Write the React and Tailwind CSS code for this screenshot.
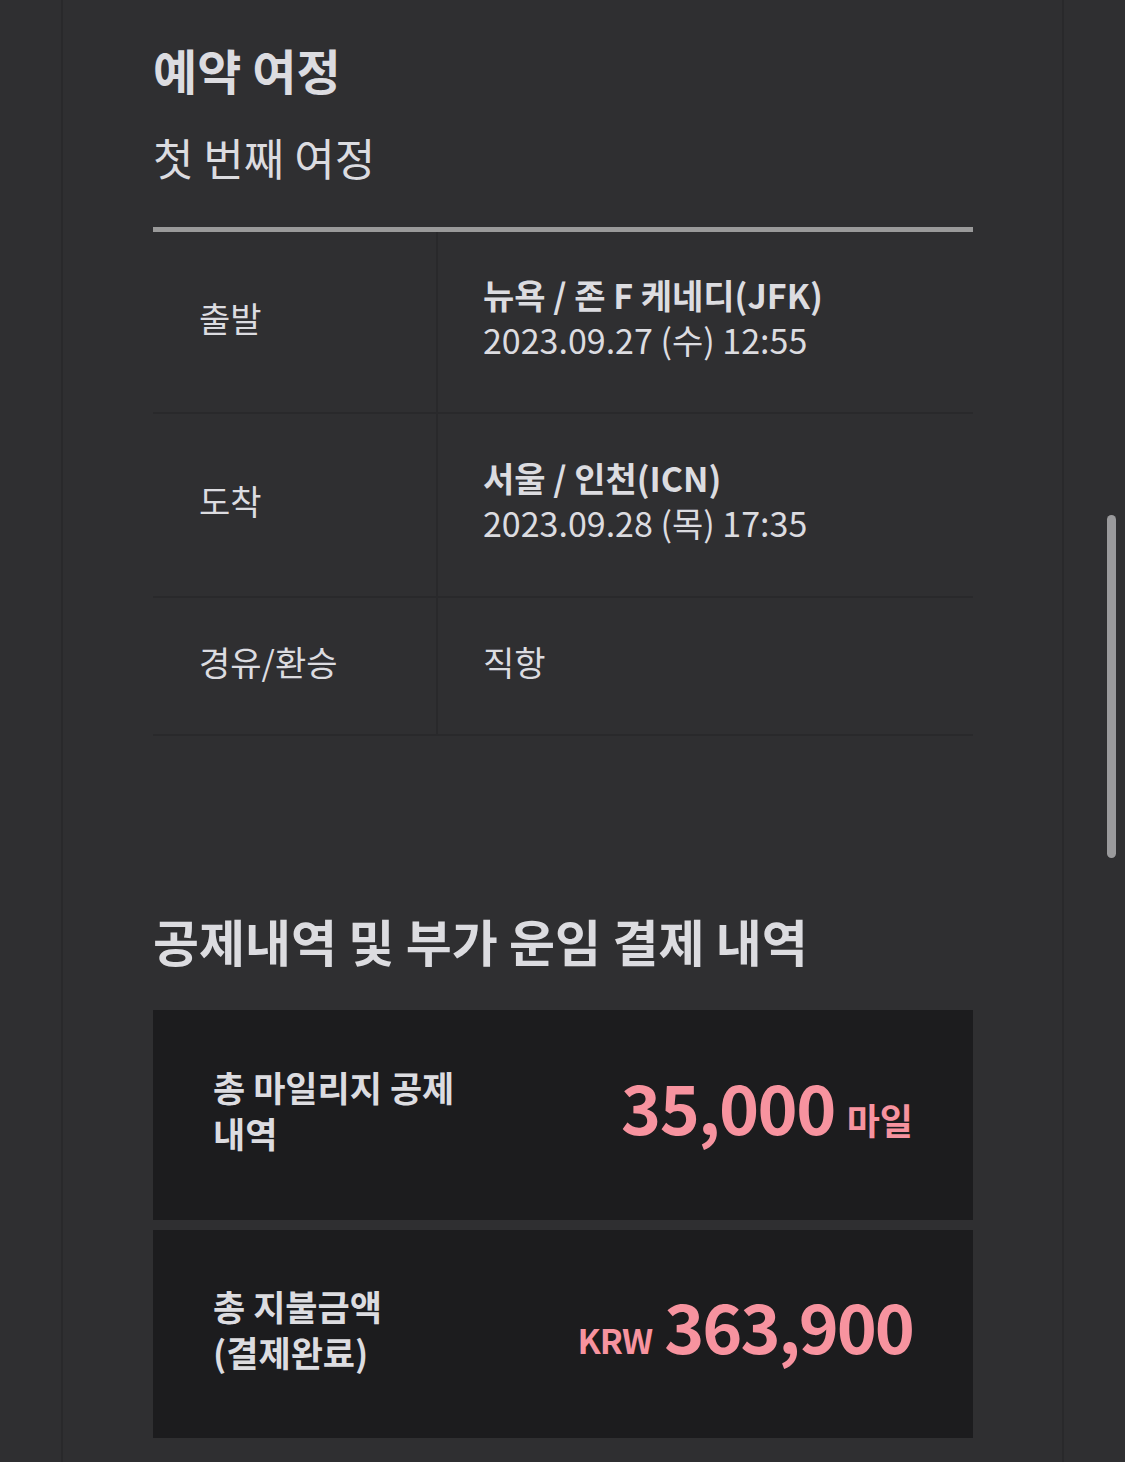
import React from 'react';

const itinerary = [
  { label: '출발', place: '뉴욕 / 존 F 케네디(JFK)', time: '2023.09.27 (수) 12:55', h: 'h-[182px]' },
  { label: '도착', place: '서울 / 인천(ICN)', time: '2023.09.28 (목) 17:35', h: 'h-[184px]' },
  { label: '경유/환승', place: null, time: '직항', h: 'h-[138px]' },
];

function ItineraryRow({ row }) {
  return (
    <div className={`flex border-b-2 border-[#29292b] ${row.h}`}>
      <div className="w-[285px] shrink-0 flex items-center pl-[46px] pb-[10px] border-r-2 border-[#29292b] text-[34px] text-[#dcdce0]">
        {row.label}
      </div>
      <div className="flex-1 flex flex-col justify-center pl-[45px] pb-[10px] text-[34px] leading-[45px] text-[#dcdce0]">
        {row.place && <div className="font-bold">{row.place}</div>}
        <div>{row.time}</div>
      </div>
    </div>
  );
}

export default function App() {
  return (
    <div
      className="relative min-h-[1462px] bg-[#2f2f31] overflow-hidden"
      style={{ fontFamily: '"Noto Sans CJK KR", "Noto Sans", sans-serif' }}
    >
      <div className="ml-[61px] w-[1003px] min-h-[1462px] border-x-2 border-[#29292b] pl-[90px] pr-[89px]">
        <h1 className="pt-[37px] text-[48px] leading-[64px] font-bold text-[#dcdce0]">예약 여정</h1>
        <h2 className="mt-[28px] text-[44px] leading-[56px] text-[#dcdce0]">첫 번째 여정</h2>

        <div className="mt-[42px] border-t-[5px] border-[#9a9a9a]">
          {itinerary.map((row) => (
            <ItineraryRow key={row.label} row={row} />
          ))}
        </div>

        <h2 className="mt-[169px] text-[50px] leading-[70px] font-bold text-[#dcdce0]">
          공제내역 및 부가 운임 결제 내역
        </h2>

        <div className="mt-[35px] flex flex-col gap-[10px]">
          <div className="h-[210px] bg-[#1c1c1e] flex items-center justify-between px-[60px]">
            <div className="w-[280px] pb-[10px] break-keep text-[35px] leading-[46px] font-semibold text-[#dcdce0]">
              총 마일리지 공제 내역
            </div>
            <div className="flex items-baseline pb-[18px] text-[#f7939f] font-semibold">
              <span className="text-[68px] leading-none tracking-[-1.5px]">35,000</span>
              <span className="ml-[12px] text-[36px] leading-none">마일</span>
            </div>
          </div>
          <div className="h-[208px] bg-[#1c1c1e] flex items-center justify-between px-[60px]">
            <div className="pb-[10px] text-[35px] leading-[46px] font-semibold text-[#dcdce0]">
              총 지불금액
              <br />
              (결제완료)
            </div>
            <div className="flex items-baseline pb-[18px] text-[#f7939f] font-semibold">
              <span className="text-[34px] leading-none tracking-[-1px]">KRW</span>
              <span className="ml-[12px] text-[68px] leading-none tracking-[-2px]">363,900</span>
            </div>
          </div>
        </div>
      </div>

      <div className="absolute left-[1107px] top-[515px] w-[9px] h-[343px] rounded-full bg-[#9a9a9c]" />
    </div>
  );
}
